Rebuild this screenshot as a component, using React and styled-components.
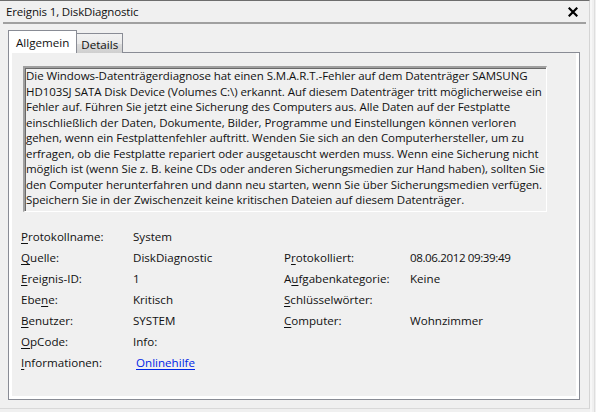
import React from 'react';
import styled, { createGlobalStyle } from 'styled-components';

const GlobalStyle = createGlobalStyle`
  html, body {
    margin: 0;
    padding: 0;
    background: #f0f0f0;
  }
  body {
    font-family: "Open Sans", "Noto Sans", Arial, sans-serif;
    font-size: 11.5px;
    color: #111;
  }
`;

const Screen = styled.div`
  width: 596px;
  height: 412px;
  display: flex;
  overflow: hidden;
  background: #f0f0f0;
`;

const Window = styled.div`
  width: 589px;
  height: 407px;
  display: flex;
  flex-direction: column;
  border-top: 1px solid #6d6d6d;
  border-right: 1px solid #d4d4d4;
  border-bottom: 1px solid #d9d9d9;
`;

const Edge = styled.div`
  flex: 1;
  border-left: 2px solid #f7f7f7;
  border-right: 1px solid #dedede;
  margin-right: 1px;
`;

const TitleBar = styled.div`
  height: 21px;
  margin: 0 3px;
  padding: 0 8px 0 3px;
  display: flex;
  align-items: center;
  justify-content: space-between;
  border-bottom: 2px solid #a0a0a0;
  font-size: 11.5px;
  letter-spacing: -0.15px;
`;

const CloseButton = styled.button`
  width: 10px;
  height: 10px;
  padding: 0;
  border: none;
  background: none;
  display: flex;
  cursor: pointer;
`;

const TabStrip = styled.div`
  display: flex;
  align-items: flex-end;
  margin: 6px 0 -1px 8px;
  height: 23px;
  position: relative;
  z-index: 1;
`;

const Tab = styled.div`
  box-sizing: border-box;
  height: ${p => (p.$active ? '23px' : '20px')};
  padding: ${p => (p.$active ? '0 7px 0 7px' : '2px 4px 0 4px')};
  display: flex;
  align-items: center;
  border: 1px solid #898c95;
  border-bottom: none;
  border-left: ${p => (p.$active ? '1px solid #898c95' : 'none')};
  background: ${p => (p.$active ? '#fff' : 'linear-gradient(#f2f2f2, #ebebeb 50%, #dddddd 51%, #cfcfcf)')};
  font-size: 11.6px;
`;

const Panel = styled.div`
  flex: 1;
  margin: 0 9px 8px 8px;
  border: 1px solid #898c95;
  background: #fff;
  padding: 0 3px 3px 3px;
  display: flex;
`;

const Page = styled.div`
  flex: 1;
  background: #f0f0f0;
  padding: 13px 0 0 11px;
  display: flex;
  flex-direction: column;
`;

const TextBox = styled.div`
  box-sizing: border-box;
  width: 524px;
  height: 146px;
  padding: 0 0 0 1px;
  border-top: 2px solid #a0a0a0;
  border-left: 2px solid #a0a0a0;
  border-right: 1px solid #fff;
  border-bottom: 1px solid #fff;
  box-shadow: inset 1px 1px 0 #696969;
  line-height: 15.5px;
  white-space: nowrap;
  overflow: hidden;
`;

const Line = styled.div`
  letter-spacing: -0.06px;
`;

const Props = styled.div`
  display: grid;
  grid-template-columns: 112px 151px 126px 1fr;
  grid-auto-rows: 21px;
  align-items: center;
  margin: 14px 0 0 -2px;
  font-size: 11.6px;
`;

const Cell = styled.div`
  white-space: nowrap;
  letter-spacing: ${p => (p.$tight ? '-0.4px' : '0')};
`;

const Key = styled.span`
  text-decoration: underline;
  text-underline-offset: 2px;
`;

const HelpLink = styled.a`
  padding-left: 3px;
  color: #0026e6;
  text-decoration: underline;
  text-underline-offset: 2px;
`;

const message = [
  'Die Windows-Datenträgerdiagnose hat einen S.M.A.R.T.-Fehler auf dem Datenträger SAMSUNG',
  'HD103SJ SATA Disk Device (Volumes C:\\) erkannt. Auf diesem Datenträger tritt möglicherweise ein',
  'Fehler auf. Führen Sie jetzt eine Sicherung des Computers aus. Alle Daten auf der Festplatte',
  'einschließlich der Daten, Dokumente, Bilder, Programme und Einstellungen können verloren',
  'gehen, wenn ein Festplattenfehler auftritt. Wenden Sie sich an den Computerhersteller, um zu',
  'erfragen, ob die Festplatte repariert oder ausgetauscht werden muss. Wenn eine Sicherung nicht',
  'möglich ist (wenn Sie z. B. keine CDs oder anderen Sicherungsmedien zur Hand haben), sollten Sie',
  'den Computer herunterfahren und dann neu starten, wenn Sie über Sicherungsmedien verfügen.',
  'Speichern Sie in der Zwischenzeit keine kritischen Dateien auf diesem Datenträger.',
];

// label split as [before, key letter, after]
const Label = ({ parts }) => (
  <Cell>
    {parts[0]}
    <Key>{parts[1]}</Key>
    {parts[2]}
  </Cell>
);

export default function App() {
  return (
    <Screen>
      <GlobalStyle />
      <Window>
        <TitleBar>
          <span>Ereignis 1, DiskDiagnostic</span>
          <CloseButton>
            <svg width="10" height="10" viewBox="0 0 10 10">
              <path d="M1.5 1.5 L8.5 8.5 M8.5 1.5 L1.5 8.5" stroke="#000" strokeWidth="2.2" strokeLinecap="square" />
            </svg>
          </CloseButton>
        </TitleBar>
        <TabStrip>
          <Tab $active>Allgemein</Tab>
          <Tab>Details</Tab>
        </TabStrip>
        <Panel>
          <Page>
            <TextBox>
              {message.map((l, i) => (
                <Line key={i}>{l}</Line>
              ))}
            </TextBox>
            <Props>
              <Label parts={['', 'P', 'rotokollname:']} />
              <Cell>System</Cell>
              <Cell />
              <Cell />

              <Label parts={['', 'Q', 'uelle:']} />
              <Cell>DiskDiagnostic</Cell>
              <Label parts={['P', 'r', 'otokolliert:']} />
              <Cell $tight>08.06.2012 09:39:49</Cell>

              <Label parts={['', 'E', 'reignis-ID:']} />
              <Cell>1</Cell>
              <Label parts={['A', 'u', 'fgabenkategorie:']} />
              <Cell>Keine</Cell>

              <Label parts={['Ebe', 'n', 'e:']} />
              <Cell>Kritisch</Cell>
              <Label parts={['', 'S', 'chlüsselwörter:']} />
              <Cell />

              <Label parts={['', 'B', 'enutzer:']} />
              <Cell>SYSTEM</Cell>
              <Label parts={['', 'C', 'omputer:']} />
              <Cell>Wohnzimmer</Cell>

              <Label parts={['', 'O', 'pCode:']} />
              <Cell>Info:</Cell>
              <Cell />
              <Cell />

              <Label parts={['', 'I', 'nformationen:']} />
              <Cell>
                <HelpLink href="#">Onlinehilfe</HelpLink>
              </Cell>
            </Props>
          </Page>
        </Panel>
      </Window>
      <Edge />
    </Screen>
  );
}
